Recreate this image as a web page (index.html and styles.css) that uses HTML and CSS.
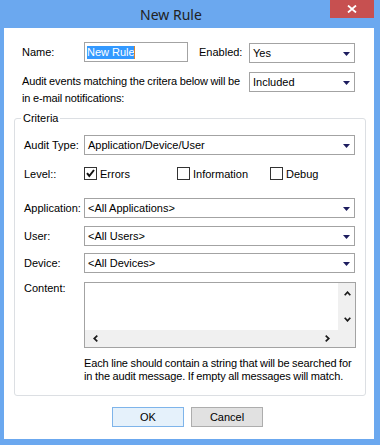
FILE: index.html
```html
<!DOCTYPE html>
<html>
<head>
<meta charset="utf-8">
<title>New Rule</title>
<link rel="stylesheet" href="styles.css">
</head>
<body>
<div class="window">
  <div class="titlebar">
    <div class="title">New Rule</div>
    <div class="close"><svg width="10" height="8" viewBox="0 0 10 8"><path d="M1 0.5 L9 7.5 M9 0.5 L1 7.5" stroke="#fff" stroke-width="1.8" fill="none"/></svg></div>
  </div>
  <div class="client">
    <div class="row1">
      <span class="lbl name-lbl">Name:</span>
      <div class="textbox"><span class="sel">New Rule</span><span class="caret"></span></div>
      <span class="lbl enabled-lbl">Enabled:</span>
      <div class="combo combo-enabled"><span>Yes</span><svg class="arrow" width="7" height="4" viewBox="0 0 7 4"><path d="M0 0H7L3.5 4Z" fill="#1c1c5e"/></svg></div>
    </div>
    <div class="row2">
      <p class="note">Audit events matching the critera below will be<br>in e-mail notifications:</p>
      <div class="combo combo-included"><span>Included</span><svg class="arrow" width="7" height="4" viewBox="0 0 7 4"><path d="M0 0H7L3.5 4Z" fill="#1c1c5e"/></svg></div>
    </div>
    <fieldset class="criteria">
      <legend>Criteria</legend>
      <div class="frow r-audit">
        <span class="flbl">Audit Type:</span>
        <div class="combo"><span>Application/Device/User</span><svg class="arrow" width="7" height="4" viewBox="0 0 7 4"><path d="M0 0H7L3.5 4Z" fill="#1c1c5e"/></svg></div>
      </div>
      <div class="frow r-level">
        <span class="flbl">Level::</span>
        <div class="checks">
          <label class="check"><span class="cb"><svg width="11" height="11" viewBox="0 0 11 11"><path d="M2 5.2 L4.3 8 L9 2" fill="none" stroke="#111" stroke-width="2"/></svg></span>Errors</label>
          <label class="check"><span class="cb"></span>Information</label>
          <label class="check"><span class="cb"></span>Debug</label>
        </div>
      </div>
      <div class="frow r-app">
        <span class="flbl">Application:</span>
        <div class="combo"><span>&lt;All Applications&gt;</span><svg class="arrow" width="7" height="4" viewBox="0 0 7 4"><path d="M0 0H7L3.5 4Z" fill="#1c1c5e"/></svg></div>
      </div>
      <div class="frow r-user">
        <span class="flbl">User:</span>
        <div class="combo"><span>&lt;All Users&gt;</span><svg class="arrow" width="7" height="4" viewBox="0 0 7 4"><path d="M0 0H7L3.5 4Z" fill="#1c1c5e"/></svg></div>
      </div>
      <div class="frow r-device">
        <span class="flbl">Device:</span>
        <div class="combo"><span>&lt;All Devices&gt;</span><svg class="arrow" width="7" height="4" viewBox="0 0 7 4"><path d="M0 0H7L3.5 4Z" fill="#1c1c5e"/></svg></div>
      </div>
      <div class="frow r-content">
        <span class="flbl">Content:</span>
        <div class="memo">
          <div class="memo-text"></div>
          <div class="vscroll">
            <svg width="7" height="5" viewBox="0 0 7 5"><path d="M0.7 4.3 L3.5 1.2 L6.3 4.3" fill="none" stroke="#1a1a1a" stroke-width="1.7"/></svg>
            <svg width="7" height="5" viewBox="0 0 7 5"><path d="M0.7 0.7 L3.5 3.8 L6.3 0.7" fill="none" stroke="#1a1a1a" stroke-width="1.7"/></svg>
          </div>
          <div class="hscroll">
            <svg width="5" height="7" viewBox="0 0 5 7"><path d="M4.3 0.7 L1.2 3.5 L4.3 6.3" fill="none" stroke="#1a1a1a" stroke-width="1.7"/></svg>
            <svg width="5" height="7" viewBox="0 0 5 7"><path d="M0.7 0.7 L3.8 3.5 L0.7 6.3" fill="none" stroke="#1a1a1a" stroke-width="1.7"/></svg>
          </div>
          <div class="corner"></div>
        </div>
      </div>
      <p class="help">Each line should contain a string that will be searched for<br>in the audit message. If empty all messages will match.</p>
    </fieldset>
    <div class="buttons">
      <button class="btn btn-ok">OK</button>
      <button class="btn">Cancel</button>
    </div>
  </div>
</div>
</body>
</html>
```
FILE: styles.css
```css
* { box-sizing: border-box; }
html, body { margin: 0; padding: 0; }
body {
  font-family: "Liberation Sans", Arial, sans-serif;
  font-size: 11px;
  color: #000;
  background: #6ba8ef;
}
.window {
  width: 380px;
  height: 445px;
  background: #6ba8ef;
  display: flex;
  flex-direction: column;
}
.titlebar {
  height: 28px;
  display: flex;
  align-items: flex-start;
  flex: none;
}
.title {
  flex: 1;
  text-align: center;
  padding-left: 12px;
  padding-top: 5px;
  font-family: "Noto Sans", "Open Sans", sans-serif;
  font-size: 14px;
  line-height: 20px;
  color: #222;
}
.close {
  width: 44px;
  height: 18px;
  margin-right: 6px;
  background: #c75050;
  display: flex;
  align-items: center;
  justify-content: center;
}
.client {
  flex: 1;
  margin: 0 6px 6px 4px;
  background: #fff;
  padding-top: 14px;
}
.row1 {
  display: flex;
  align-items: flex-start;
  padding-left: 18px;
  height: 21px;
}
.lbl { line-height: 20px; white-space: nowrap; }
.name-lbl { width: 62px; }
.enabled-lbl { width: 50px; margin-left: 11px; }
.textbox {
  width: 104px;
  height: 20px;
  border: 1px solid #a3a3a3;
  padding: 0 2px;
  display: flex;
  align-items: center;
}
.sel {
  background: #3399ff;
  color: #fff;
  line-height: 13px;
}
.caret {
  width: 1px;
  height: 13px;
  background: #d9822b;
  margin-left: -1px;
}
.combo {
  height: 20px;
  border: 1px solid #a3a3a3;
  background: #fff;
  display: flex;
  align-items: center;
  justify-content: space-between;
  padding: 0 4px 0 3px;
  white-space: nowrap;
}
.arrow { flex: none; margin-top: 1px; }
.combo-enabled { width: 106px; margin-top: 1px; }
.row2 {
  display: flex;
  align-items: flex-start;
  padding-left: 18px;
  margin-top: 9px;
}
.note {
  margin: 0;
  width: 227px;
  line-height: 17px;
  padding-top: 1px;
  white-space: nowrap;
  letter-spacing: -0.12px;
  word-spacing: -0.3px;
}
.combo-included { width: 106px; }
.criteria {
  margin: 4px 8px 0 10px;
  padding: 10px 10px 12px 9px;
  border: 1px solid #dcdfe3;
  border-radius: 3px;
  min-width: 0;
}
.criteria legend {
  padding: 0 2px;
  margin-left: -3px;
  line-height: 14px;
  font-size: 11px;
}
.frow {
  display: flex;
  align-items: center;
}
.frow .combo { flex: 1; }
.flbl { width: 60px; flex: none; white-space: nowrap; }
.r-level { margin-top: 10px; height: 17px; }
.r-app { margin-top: 16px; }
.r-user { margin-top: 8px; }
.r-device { margin-top: 7px; }
.r-content { margin-top: 9px; align-items: flex-start; }
.r-content .flbl { line-height: 13px; }
.checks {
  display: grid;
  grid-template-columns: 93px 93px 1fr;
}
.check {
  display: flex;
  align-items: center;
  gap: 3px;
}
.cb {
  width: 13px;
  height: 13px;
  border: 1px solid #333;
  background: #fff;
  flex: none;
  display: flex;
}
.memo {
  flex: 1;
  height: 66px;
  margin-right: -1px;
  border: 1px solid #a3a3a3;
  display: grid;
  grid-template-columns: 1fr 17px;
  grid-template-rows: 1fr 17px;
}
.memo-text { background: #fff; }
.vscroll {
  background: #f0f0f0;
  display: flex;
  flex-direction: column;
  justify-content: space-between;
  align-items: center;
  padding: 8px 0 8px 1px;
}
.hscroll {
  background: #f0f0f0;
  display: flex;
  justify-content: space-between;
  align-items: center;
  padding: 0 8px 1px 8px;
}
.corner { background: #f0f0f0; }
.help {
  margin: 9px 0 0 60px;
  line-height: 13px;
  white-space: nowrap;
  letter-spacing: -0.12px;
  word-spacing: -0.3px;
}
.buttons {
  display: flex;
  justify-content: center;
  gap: 7px;
  margin-top: 11px;
  padding-right: 3px;
}
.btn {
  width: 72px;
  height: 20px;
  padding: 0;
  font-family: "Liberation Sans", Arial, sans-serif;
  font-size: 11px;
  color: #000;
  background: #e1e1e1;
  border: 1px solid #adadad;
}
.btn-ok {
  background: #e5f1fb;
  border-color: #7eb4ea;
}
```
